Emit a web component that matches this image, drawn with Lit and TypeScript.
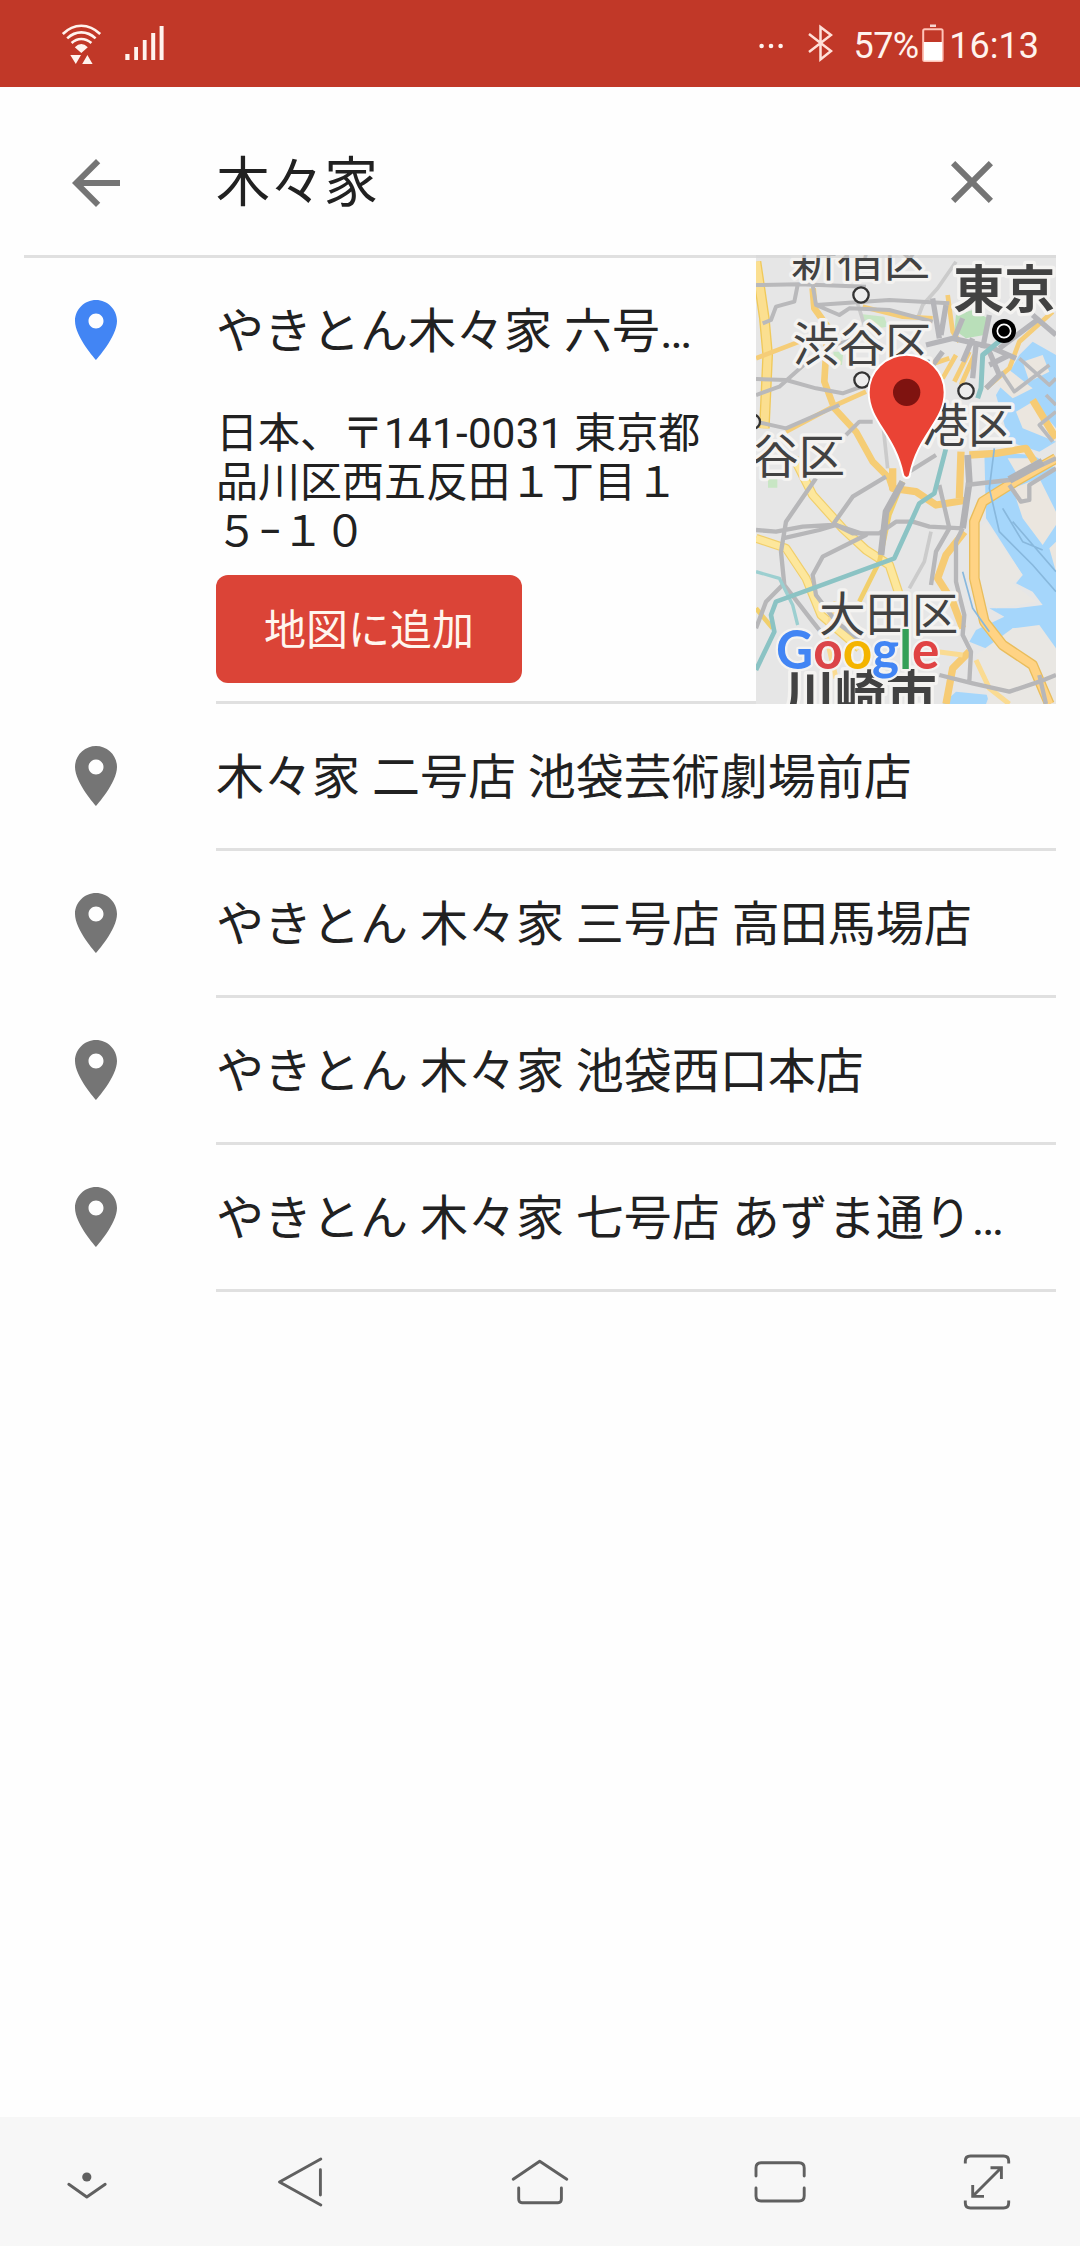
import { LitElement, html, svg, css } from "lit";
import { customElement, property } from "lit/decorators.js";

const FONT = css`Roboto, "Noto Sans CJK JP", sans-serif`;

const PIN = "M12 2C8.13 2 5 5.13 5 9c0 5.25 7 13 7 13s7-7.75 7-13c0-3.87-3.13-7-7-7zm0 9.5c-1.38 0-2.5-1.12-2.5-2.5s1.12-2.5 2.5-2.5 2.5 1.12 2.5 2.5-1.12 2.5-2.5 2.5z";
const BACK = "M20 11H7.83l5.59-5.59L12 4l-8 8 8 8 1.41-1.41L7.83 13H20v-2z";
const CLOSE = "M19 6.41L17.59 5 12 10.59 6.41 5 5 6.41 10.59 12 5 17.59 6.41 19 12 13.41 17.59 19 19 17.59 13.41 12z";

@customElement("status-bar")
class StatusBar extends LitElement {
  static styles = css`
    :host { display: flex; align-items: center; height: 87px; box-sizing: border-box; padding: 0 41px 0 60px;
      background: #c13828; color: #fff3ee; font: 36px/42px ${FONT}; }
    svg { display: block; flex: none; fill: #fff3ee; }
    .signal { margin-left: 21px; }
    .dots { margin-left: auto; }
    .bluetooth { margin-left: 23px; }
    .percent { margin-left: 21px; letter-spacing: -0.7px; padding-top: 4px; }
    .battery { margin-left: 3px; }
    .time { margin-left: 5px; padding-top: 4px; }
  `;
  render() {
    return html`
      <svg width="43" height="43" viewBox="60 22 43 43">
        <g fill="none" stroke="#fff3ee" stroke-width="2.6">
          <path d="M62.8 34Q71 25.7 81.3 25.7T100.2 34"/>
          <path d="M67.2 38.4Q73.5 32.4 81.3 32.4T95.6 38.4"/>
          <path d="M71.6 43Q76 39 81.3 39T91.4 43"/>
        </g>
        <path d="M74.8 47.3Q81.3 40.5 87.8 47.3L81.3 53ZM70.3 55H81L75.8 64ZM82.2 64H92.6L87.4 55Z"/>
      </svg>
      <svg class="signal" width="42" height="43" viewBox="124 22 42 43">
        <path d="M125.3 54h4.2v6h-4.2zM134.2 47h3.8v13h-3.8zM142.8 40h3.8v20h-3.8zM151.2 33h4v27h-4zM159.6 26h4v34h-4z"/>
      </svg>
      <svg class="dots" width="27" height="43" viewBox="759 22 27 43">
        <circle cx="762.6" cy="46" r="2.3"/><circle cx="772" cy="46" r="2.3"/><circle cx="781.6" cy="46" r="2.3"/>
      </svg>
      <svg class="bluetooth" width="25" height="43" viewBox="809 22 25 43">
        <path fill="none" stroke="#ffe0d8" stroke-width="2.5" d="M810 34L832 51L821.5 59.5V27L832 35L810 52"/>
      </svg>
      <span class="percent">57%</span>
      <svg class="battery" width="23" height="43" viewBox="922 22 23 43">
        <path d="M931 24.5h6v2.5h-6z" opacity=".85"/>
        <rect x="924.2" y="29.3" width="19.4" height="31.6" rx="1.5" fill="none" stroke="#ffc4b8" stroke-width="2"/>
        <path fill="#fff" d="M925 42h18v18.5h-18z"/>
      </svg>
      <span class="time">16:13</span>`;
  }
}

@customElement("search-header")
class SearchHeader extends LitElement {
  @property() query = "";
  static styles = css`
    :host { display: flex; align-items: center; height: 171px; box-sizing: border-box; margin: 0 24px;
      padding: 21px 48px 0 36px; border-bottom: 3px solid #e0e0e0; color: #212121; }
    svg { fill: #757575; width: 72px; height: 72px; flex: none; }
    .back { margin-top: 3px; }
    .query { flex: 1; margin-left: 84px; padding-top: 4px; font: 54px/72px ${FONT}; }
  `;
  render() {
    return html`
      <svg class="back" viewBox="0 0 24 24"><path d=${BACK}/></svg>
      <span class="query">${this.query}</span>
      <svg viewBox="0 0 24 24"><path d=${CLOSE}/></svg>`;
  }
}

type Stroke = [color: string, width: number, d: string];

const AREAS: [string, string][] = [
  ["#a5d6fb", "M720 420L790 300L830 260L900 300V560L850 590L760 560Z"],
  ["#a5d6fb", "M685 590L830 600L900 640V1185L850 1120L770 1120L715 1190L640 1160L660 1125L745 1085L700 1060L780 1060L860 1050L830 1010L780 985L800 960L690 790Z"],
  ["#a5d6fb", "M560 1347L600 1310L700 1320L690 1347Z"],
  ["#ebe6df", "M725 390L760 345L830 400L770 430ZM800 320L860 300L880 350L820 380ZM780 470L830 440L900 520V560L800 520Z"],
  ["#ebe6df", "M755 610L820 610L860 650L790 670ZM770 700L850 670L900 770V810L860 870L800 790ZM880 880L900 860V950Z"],
  ["#e9e7e3", "M690 800L800 960L770 985L840 1040L720 1060L660 1020L660 830Z"],
  ["#e9e7e3", "M770 1120L850 1110L900 1180V1347H700L660 1200Z"],
  ["#b9dfb9", "M600 180L650 165L695 190L685 240L630 250L595 225Z"],
  ["#c8e6c4", "M320 178L385 185L395 215L330 225ZM232 290L262 290L258 330L235 325ZM36 672H64V698H36Z"],
];

const ROADS: Stroke[] = [
  ["#cbcbcb", 11, "M300 130L325 210M600 20L545 100L500 150L485 190M525 830L505 920L460 1000M380 500L395 640"],
  ["#f0c95a", 32, "M0 20L25 190L35 300L25 520"],
  ["#fbdf90", 24, "M0 20L25 190L35 300L25 520"],
  ["#f5cd75", 20, "M170 100L175 160L215 215L205 380L235 460L300 530L350 620L400 670L410 700"],
  ["#f5cd78", 14, "M0 310L130 260M90 530L240 450L330 410M320 155L440 185L530 190M575 120L590 230L610 260M520 330L580 310M640 290L595 380M655 300L615 390M600 300L560 370M890 170L790 260L760 340L690 400"],
  ["#f1cf6c", 28, "M115 610L170 720L260 820L330 885L400 930L430 1020"],
  ["#fde79c", 21, "M115 610L170 720L260 820L330 885L400 930L430 1020"],
  ["#f1cf6c", 27, "M0 850L90 880L150 970L195 1080L310 1180"],
  ["#fde79c", 20, "M0 850L90 880L150 970L195 1080L310 1180"],
  ["#f1cf6c", 14, "M0 1060L50 1120M440 680L400 780L370 920L310 1040"],
  ["#e9bd5c", 32, "M900 610L760 690L680 740L655 800L655 970L685 1100L740 1170L830 1230L880 1347"],
  ["#ffd384", 24, "M900 610L760 690L680 740L655 800L655 970L685 1100L740 1170L830 1230L880 1347"],
  ["#f6cb74", 22, "M625 830L570 900L545 970L590 1040L620 1120M830 435L900 550M640 600L720 595L810 580L835 620M410 640V700L480 710L540 750L635 735M615 590L610 730M640 1190L590 1240L570 1347"],
  ["#fadb92", 15, "M660 1215L700 1300L760 1347M545 1190L620 1200M240 1040L210 1140L240 1270"],
  ["#b9b9bb", 12, "M0 90L130 88L330 95M125 90L115 140L60 155L45 195L20 205M170 90L180 150L400 135L580 145M180 150L250 180L280 160L400 165L530 200"],
  ["#b9b9bb", 12, "M0 372L90 375L180 400L260 415L330 390M0 420L70 395L160 315L240 270L330 240M0 500L90 520L250 450M270 540L310 500L350 500"],
  ["#b7b7b9", 13, "M180 670L90 800L75 890L85 990L170 1100L210 1150M0 825L60 830L140 815L230 810L290 725L390 665M80 850L190 825L240 810L290 835L370 835L420 800L470 800L520 815L620 820"],
  ["#b7b7b9", 13, "M85 985L30 1040L0 1120M240 810L330 840L270 870L200 905L170 960L180 1020L240 1100L320 1160"],
  ["#b2b2b5", 20, "M440 680L390 770L375 900M635 600L640 680L620 820"],
  ["#b7b7b9", 13, "M620 820L600 860L600 980L625 1080L620 1140L645 1190L640 1280M630 690L760 675L900 610M550 690L580 820L540 890L525 990M550 1260L650 1285L760 1310L850 1280L900 1260M850 1260L870 1347M460 650L540 600M760 690L795 740L820 735L820 690L900 640"],
  ["#b5b5b9", 16, "M510 270L590 250L700 275L780 310M530 130L550 250M570 150L555 240M620 190L595 250M650 250L620 320M700 180L680 280M730 280L850 190M760 300L700 330M830 180L900 240M560 290L530 330M660 270L650 370M700 290L730 360L690 400"],
  ["#b9babd", 11, "M790 310L880 390L900 370M735 350L775 410L880 330M870 420L900 450M900 470L850 510L890 560"],
  ["#b2b2b5", 24, "M760 675L860 620"],
  ["#88b8dd", 5, "M715 580L700 700L730 830L830 930L900 1010M740 760L800 860L860 885M770 800L900 950M620 950L650 1060L700 1130"],
  ["#9ccfd0", 10, "M0 950L70 970L110 1050L125 1110"],
  ["#8bc3c4", 15, "M745 200L740 250L680 300L675 400L665 430"],
  ["#8bc3c4", 14, "M570 580L535 715L490 745L415 910L170 1000L60 1040L45 1080L55 1130L0 1245"],
];

const LABELS: [string, number, number, boolean][] = [
  ["新宿区", 105, 64, false],
  ["渋谷区", 110, 319, false],
  ["谷区", -11, 653, false],
  ["港区", 497, 561, false],
  ["大田区", 190, 1129, false],
  ["東京", 592, 158, true],
  ["川崎市", 83, 1374, true],
];

@customElement("map-preview")
class MapPreview extends LitElement {
  static styles = css`
    :host { display: block; width: 300px; height: 449px; overflow: hidden; }
    svg { display: block; }
    text { font-family: "Noto Sans CJK JP", sans-serif; font-size: 139px; fill: #424242; stroke: #f4f3f1;
      stroke-width: 20px; stroke-linejoin: round; paint-order: stroke; }
    .big { font-size: 153px; font-weight: 700; }
    .brand { font-family: Lato, sans-serif; font-size: 160px; font-weight: 700; stroke-width: 14px; }
  `;
  render() {
    return html`<svg width="300" height="449" viewBox="0 0 900 1347">
      <rect width="900" height="1347" fill="#e6e6e6"/>
      ${AREAS.map(([c, d]) => svg`<path fill=${c} d=${d}/>`)}
      ${ROADS.map(([c, w, d]) => svg`<path fill="none" stroke=${c} stroke-width=${w} stroke-linejoin="round" d=${d}/>`)}
      <g fill="#ededed" stroke="#333" stroke-width="7">
        <circle cx="315" cy="120" r="23"/><circle cx="318" cy="375" r="23"/>
        <circle cx="630" cy="408" r="23"/><circle cx="-9" cy="500" r="21"/>
      </g>
      <circle cx="744" cy="228" r="36"/>
      <circle cx="744" cy="228" r="20" fill="none" stroke="#fff" stroke-width="5"/>
      ${LABELS.map(([t, x, y, big]) => svg`<text class=${big ? "big" : ""} x=${x} y=${y}>${t}</text>`)}
      <path fill="#ea4335" stroke="#fff" stroke-width="6" d="M452 299C388 299 338 350 338 412C338 500 415 535 441 658Q443 669 452 669T462 658C488 535 566 500 566 412C566 350 516 299 452 299Z"/>
      <circle cx="452" cy="412" r="41" fill="#7f1310"/>
      <text class="brand" x="60" y="1241" textLength="490" lengthAdjust="spacingAndGlyphs"><tspan fill="#4285f4">G</tspan><tspan fill="#db4448">o</tspan><tspan fill="#f4b400">o</tspan><tspan fill="#4285f4">g</tspan><tspan fill="#34a058">l</tspan><tspan fill="#e04343">e</tspan></text>
      <rect width="900" height="9" fill="#d8d8d8" opacity=".8"/>
    </svg>`;
  }
}

@customElement("place-row")
class PlaceRow extends LitElement {
  @property() name = "";
  static styles = css`
    :host { display: flex; align-items: center; height: 147px; padding: 0 24px 0 60px; }
    svg { fill: #757575; width: 72px; height: 72px; flex: none; margin-bottom: 3px; }
    .name { flex: 1; min-width: 0; margin-left: 84px; height: 144px; border-bottom: 3px solid #e0e0e0;
      font: 48px/148px ${FONT}; color: #212121; white-space: nowrap; }
  `;
  render() {
    return html`<svg viewBox="0 0 24 24"><path d=${PIN}/></svg><div class="name">${this.name}</div>`;
  }
}

@customElement("nav-bar")
class NavBar extends LitElement {
  static styles = css`
    :host { display: block; height: 129px; background: #f7f7f7; }
    .keys { display: grid; grid-template-columns: 209px 240px 240px 213px 56px; align-items: center; height: 129px; padding: 0 61px; }
    svg { display: block; fill: none; stroke: #606060; stroke-width: 2.9; stroke-linecap: round; stroke-linejoin: round; }
    .dot { fill: #606060; stroke: none; }
    .square { stroke-linecap: butt; stroke-linejoin: miter; }
  `;
  render() {
    return html`<div class="keys">
      <svg width="52" height="60" viewBox="61 2152 52 60"><circle class="dot" cx="86.8" cy="2177" r="4.6"/><path d="M68.8 2184.3L86.8 2197L105.2 2184.3"/></svg>
      <svg width="60" height="60" viewBox="270 2152 60 60"><path d="M320.8 2159L279.5 2182L320.8 2205M320.4 2169.8V2195"/></svg>
      <svg width="60" height="60" viewBox="510 2152 60 60"><path d="M513.2 2179.3L539.7 2161.3L566.8 2179.3M518.7 2188V2199Q518.7 2202.7 522 2202.7H558Q561.4 2202.7 561.4 2199V2188"/></svg>
      <svg width="60" height="60" viewBox="750 2152 60 60"><path d="M756 2176V2168Q756 2162.8 761 2162.8H799Q804.2 2162.8 804.2 2168V2176M756 2188V2196Q756 2201 761 2201H799Q804.2 2201 804.2 2196V2188"/></svg>
      <svg width="56" height="60" viewBox="963 2152 56 60"><path class="square" d="M965.3 2163.5V2161Q965.3 2156 970.5 2156H1003.5Q1008.7 2156 1008.7 2161V2163.5M965.3 2200.5V2203Q965.3 2208 970.5 2208H1003.5Q1008.7 2208 1008.7 2203V2200.5M973 2196L1001 2168M990.5 2167.7H1001.4V2179M972.7 2185V2196.4H984"/></svg>
    </div>`;
  }
}

@customElement("app-root")
class AppRoot extends LitElement {
  static styles = css`
    :host { display: flex; flex-direction: column; width: 1080px; height: 2246px; overflow: hidden;
      background: #fefefe; color: #212121; font-family: ${FONT}; }
    .selected { display: flex; height: 446px; margin-right: 24px; padding-left: 60px; }
    .pin { width: 72px; height: 72px; margin: 36px 84px 0 0; fill: #4285f4; flex: none; }
    .details { display: flex; flex-direction: column; align-items: flex-start; flex: 1; min-width: 0;
      box-sizing: border-box; height: 446px; border-bottom: 3px solid #e0e0e0; }
    .title { font-size: 48px; line-height: 144px; white-space: nowrap; margin-top: 2px; }
    .address { font-size: 42px; line-height: 49px; white-space: nowrap; margin-top: 5px; }
    .postcode { letter-spacing: 0.36px; }
    .add { all: unset; box-sizing: border-box; margin-top: 19px; height: 108px; padding: 0 48px; border-radius: 12px;
      background: #db4437; color: #fff6ee; font: 42px/111px ${FONT}; }
    map-preview { flex: none; margin-top: -3px; }
    .list { flex: 1; }
    place-row { box-sizing: border-box; }
  `;
  private places = [
    "木々家 二号店 池袋芸術劇場前店",
    "やきとん 木々家 三号店 高田馬場店",
    "やきとん 木々家 池袋西口本店",
    "やきとん 木々家 七号店 あずま通り…",
  ];
  render() {
    return html`
      <status-bar></status-bar>
      <search-header query="木々家"></search-header>
      <section class="selected">
        <svg class="pin" viewBox="0 0 24 24"><path d=${PIN}/></svg>
        <div class="details">
          <div class="title">やきとん木々家 六号…</div>
          <div class="address">日本、〒<span class="postcode">141-0031</span> 東京都<br>品川区西五反田１丁目１<br>５−１０</div>
          <button class="add">地図に追加</button>
        </div>
        <map-preview></map-preview>
      </section>
      <div class="list">${this.places.map((name) => html`<place-row .name=${name}></place-row>`)}</div>
      <nav-bar></nav-bar>`;
  }
}
